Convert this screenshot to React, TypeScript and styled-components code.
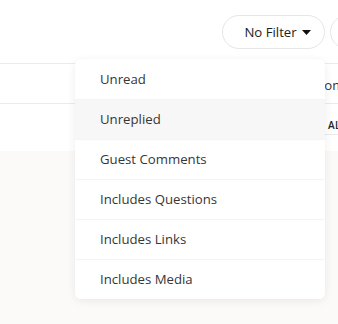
import React from "react";
import styled, { createGlobalStyle } from "styled-components";

const Global = createGlobalStyle`
  html, body { margin: 0; padding: 0; background: #ffffff; }
  body { font-family: "Open Sans", "Noto Sans", Arial, sans-serif; color: #333333; }
  * { box-sizing: border-box; }
`;

const Page = styled.div`
  position: relative;
  width: 338px;
  height: 324px;
  overflow: hidden;
  display: flex;
  flex-direction: column;
  background: #ffffff;
`;

const Toolbar = styled.div`
  height: 64px;
  flex-shrink: 0;
  display: flex;
  align-items: center;
  gap: 5px;
  padding-left: 222px;
  border-bottom: 1px solid #ebebeb;
`;

const PillButton = styled.button<{ $width: number }>`
  flex-shrink: 0;
  width: ${(p) => p.$width}px;
  height: 34px;
  border-radius: 17px;
  border: 1px solid #e6e6e6;
  background: #ffffff;
  display: flex;
  align-items: center;
  justify-content: center;
  gap: 5px;
  padding: 0 0 0 8px;
  font-family: inherit;
  font-size: 13.2px;
  color: #222222;
  cursor: pointer;
`;

const Caret = styled.svg`
  width: 9px;
  height: 5px;
  margin-top: 1px;
`;

const HeaderRow = styled.div`
  height: 40px;
  flex-shrink: 0;
  display: flex;
  align-items: center;
  padding-left: 316px;
  padding-top: 3px;
  border-bottom: 1px solid #ebebeb;
  font-size: 13.2px;
  color: #333333;
  white-space: nowrap;
`;

const FilterRow = styled.div`
  height: 47px;
  flex-shrink: 0;
  display: flex;
  padding-left: 325px;
`;

const FilterCell = styled.div`
  flex: 1;
  height: 31px;
  display: flex;
  align-items: flex-end;
  padding-left: 3px;
  padding-bottom: 2px;
  border-bottom: 1px solid #ebebeb;
  font-size: 10px;
  font-weight: 600;
  letter-spacing: 0.3px;
  color: #222222;
  white-space: nowrap;
`;

const Content = styled.div`
  flex: 1;
  background: #fcfaf8;
`;

const Menu = styled.ul`
  position: absolute;
  left: 75px;
  top: 59px;
  width: 250px;
  margin: 0;
  padding: 0;
  list-style: none;
  background: #ffffff;
  border-radius: 6px;
  box-shadow: 0 2px 10px rgba(0, 0, 0, 0.07), 0 0 1px rgba(0, 0, 0, 0.04);
  overflow: hidden;
`;

const MenuItem = styled.li<{ $active?: boolean }>`
  height: 40px;
  display: flex;
  align-items: center;
  padding-left: 25px;
  padding-bottom: 1px;
  font-size: 13.2px;
  color: #363636;
  background: ${(p) => (p.$active ? "#f7f7f7" : "#ffffff")};
  & + & {
    border-top: 1px solid #f4f4f4;
  }
`;

const items = [
  "Unread",
  "Unreplied",
  "Guest Comments",
  "Includes Questions",
  "Includes Links",
  "Includes Media",
];

export default function App() {
  return (
    <Page>
      <Global />
      <Toolbar>
        <PillButton $width={103}>
          No Filter
          <Caret viewBox="0 0 9 5">
            <path d="M0 0 H9 L4.5 5 Z" fill="#111" />
          </Caret>
        </PillButton>
        <PillButton $width={60} />
      </Toolbar>
      <HeaderRow>Comments</HeaderRow>
      <FilterRow>
        <FilterCell>ALL</FilterCell>
      </FilterRow>
      <Content />
      <Menu>
        {items.map((label) => (
          <MenuItem key={label} $active={label === "Unreplied"}>
            {label}
          </MenuItem>
        ))}
      </Menu>
    </Page>
  );
}
